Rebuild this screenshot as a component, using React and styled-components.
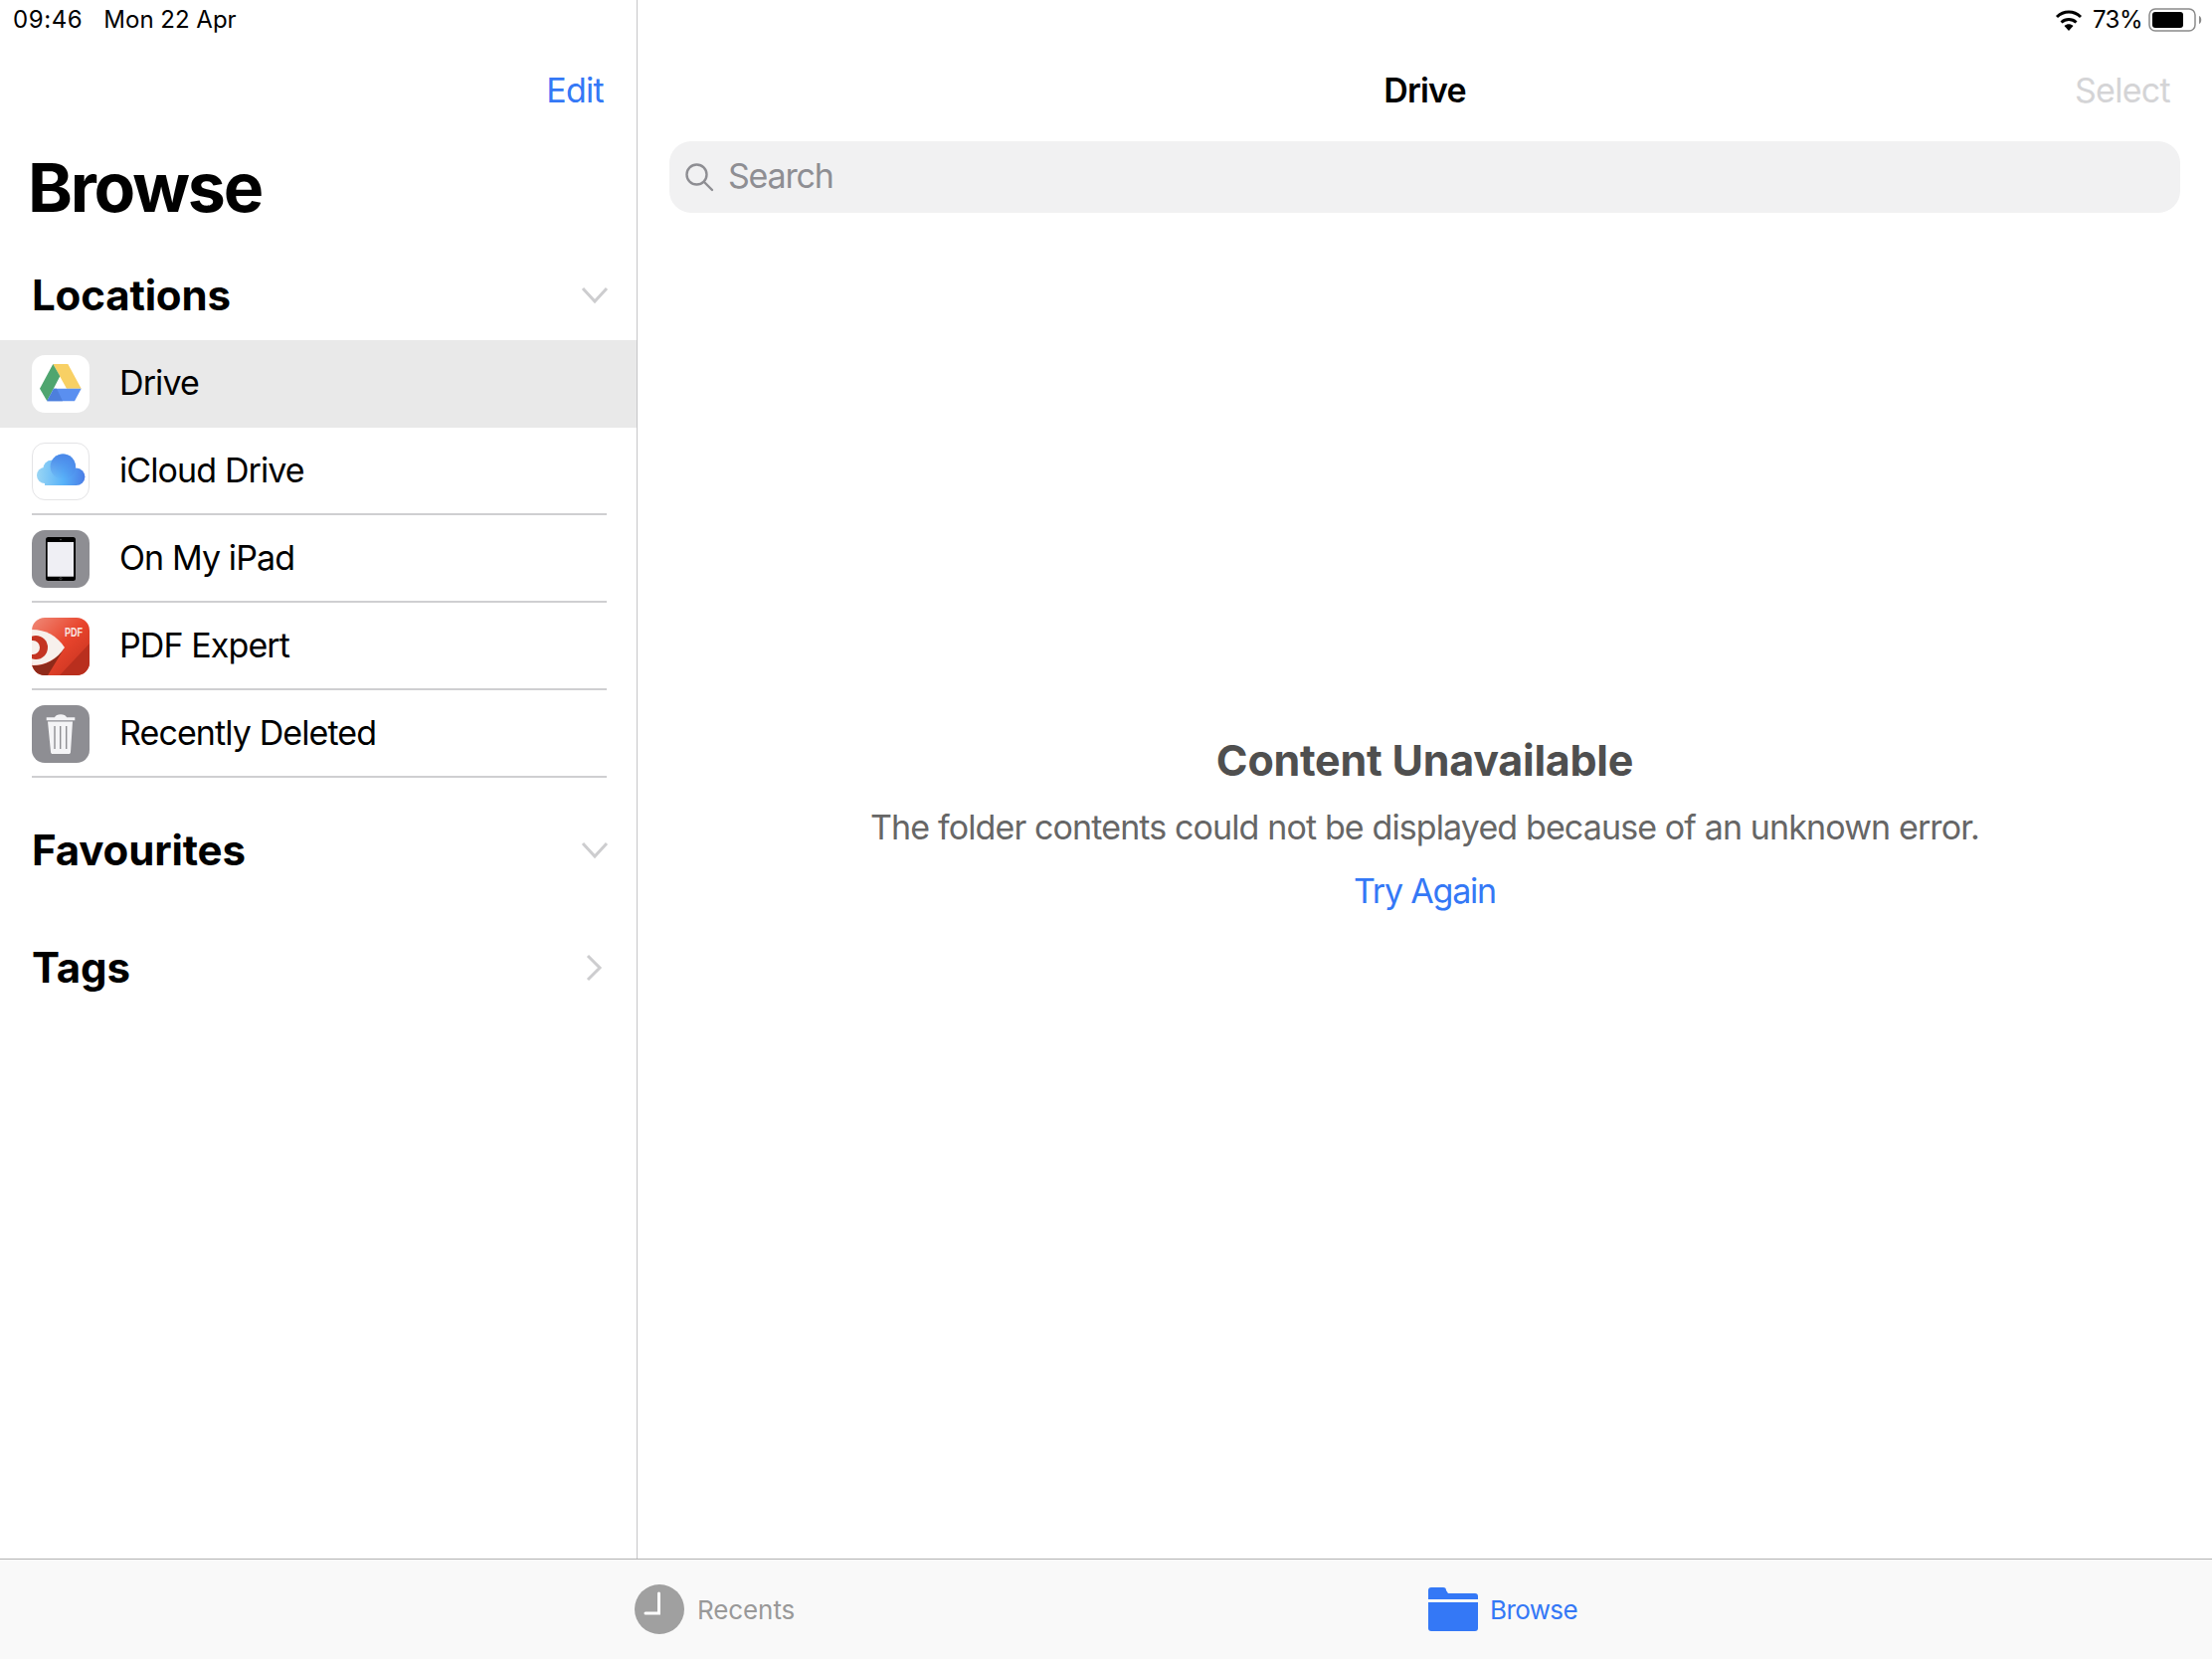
import React from "react";
import styled, { createGlobalStyle } from "styled-components";

const GlobalStyle = createGlobalStyle`
  html, body { margin: 0; padding: 0; background: #fff; }
  body { font-family: Inter, "Liberation Sans", sans-serif; color: #000; }
`;

const BLUE = "#3478f6";

const Page = styled.div`
  width: 2224px;
  height: 1668px;
  display: flex;
  flex-direction: column;
  overflow: hidden;
`;
const Main = styled.div`
  flex: 1;
  min-height: 0;
  display: flex;
`;
const Sidebar = styled.aside`
  width: 640px;
  flex: none;
  border-right: 1px solid #c6c6c8;
  display: flex;
  flex-direction: column;
`;
const Detail = styled.main`
  flex: 1;
  min-width: 0;
  display: flex;
  flex-direction: column;
`;
const StatusBar = styled.div`
  height: 40px;
  display: flex;
  align-items: center;
  justify-content: ${(p) => (p.$right ? "flex-end" : "flex-start")};
  padding: 0 9px 0 13px;
  font-size: 24px;
  line-height: 40px;
  color: #000;
`;
const StatusTime = styled.span`
  letter-spacing: 0.6px;
`;
const StatusDate = styled.span`
  margin-left: 21px;
`;
const Percent = styled.span`
  margin: 0 6px 0 10px;
  letter-spacing: -0.5px;
`;
const NavBar = styled.div`
  height: 100px;
  flex: none;
  display: flex;
  align-items: center;
  justify-content: flex-end;
  padding: 0 33px 0 32px;
`;
const NavButton = styled.span`
  font-size: 34px;
  letter-spacing: -0.7px;
  color: ${(p) => (p.$disabled ? "#d4d4d6" : BLUE)};
`;
const BigTitle = styled.h1`
  margin: 0;
  height: 96px;
  padding-left: 28px;
  font-size: 68px;
  font-weight: 700;
  line-height: 96px;
  letter-spacing: -2.2px;
`;
const SectionHead = styled.div`
  height: ${(p) => p.$height}px;
  box-sizing: border-box;
  padding: ${(p) => p.$top || 0}px 28px 0 32px;
  display: flex;
  align-items: center;
  justify-content: space-between;
`;
const SectionLabel = styled.span`
  padding-bottom: 2px;
  font-size: 42px;
  font-weight: 700;
  letter-spacing: -0.15px;
`;
const Rows = styled.div`
  display: flex;
  flex-direction: column;
`;
const Row = styled.div`
  height: 88px;
  box-sizing: border-box;
  padding-left: 32px;
  display: flex;
  align-items: center;
  background: ${(p) => (p.$active ? "#e9e9e9" : "transparent")};
`;
const RowBody = styled.div`
  flex: 1;
  height: 100%;
  box-sizing: border-box;
  margin-left: 30px;
  margin-right: 30px;
  padding-bottom: 3px;
  display: flex;
  align-items: center;
  font-size: 34px;
  letter-spacing: -0.9px;
  position: relative;
  &::after {
    content: "";
    display: ${(p) => (p.$plain ? "none" : "block")};
    position: absolute;
    left: -88px;
    right: 0;
    bottom: 0;
    height: 2px;
    background: #cfcfd1;
  }
`;
const IconFrame = styled.div`
  width: 58px;
  height: 58px;
  flex: none;
  border-radius: 13px;
  overflow: hidden;
  box-sizing: border-box;
  background: #fff;
  ${(p) => (p.$outlined ? "border: 1px solid #e4e4e6;" : "")}
  svg { display: block; width: 100%; height: 100%; }
`;
const DetailNav = styled.div`
  height: 100px;
  flex: none;
  display: flex;
  align-items: center;
  justify-content: center;
  position: relative;
  font-size: 34px;
  font-weight: 600;
  letter-spacing: -0.8px;
`;
const SelectSlot = styled.div`
  position: absolute;
  right: 42px;
  top: 50%;
  transform: translateY(-50%);
  font-weight: 400;
`;
const SearchBox = styled.div`
  height: 72px;
  box-sizing: border-box;
  margin: 2px 32px 0;
  border-radius: 22px;
  background: #f1f1f2;
  display: flex;
  align-items: center;
  padding: 0 0 0 15px;
  font-size: 34px;
  letter-spacing: -1.2px;
  color: #8e8e93;
  gap: 14px;
`;
const SearchLabel = styled.span`
  padding-bottom: 3px;
`;
const Empty = styled.div`
  flex: 1;
  display: flex;
  flex-direction: column;
  align-items: center;
  padding-top: 520px;
`;
const EmptyTitle = styled.div`
  font-size: 43px;
  font-weight: 700;
  line-height: 60px;
  letter-spacing: -0.25px;
  color: #4f4f4f;
`;
const EmptyText = styled.div`
  margin-top: 17px;
  font-size: 34px;
  line-height: 42px;
  letter-spacing: -0.88px;
  color: #666;
`;
const Retry = styled.div`
  margin-top: 22px;
  font-size: 34px;
  line-height: 42px;
  letter-spacing: -1.2px;
  color: ${BLUE};
`;
const TabBar = styled.nav`
  height: 100px;
  flex: none;
  border-top: 1px solid #b2b2b2;
  background: #f9f9f9;
  display: flex;
`;
const TabSlot = styled.div`
  width: ${(p) => p.$width}px;
  flex: none;
  display: flex;
  align-items: center;
  padding-left: ${(p) => p.$left}px;
  box-sizing: border-box;
`;
const TabLabel = styled.span`
  margin-left: ${(p) => (p.$active ? 12 : 13)}px;
  font-size: 26px;
  letter-spacing: ${(p) => (p.$active ? "-0.6px" : "-0.1px")};
  color: ${(p) => (p.$active ? BLUE : "#999")};
`;

const DriveIcon = () => (
  <svg viewBox="0 0 58 58">
    <path d="M21.3 9 H36.3 L49.7 33.7 H35 Z" fill="#f8d064" />
    <path d="M21.3 9 L28.3 21.3 L15.3 46.3 L8 33.7 Z" fill="#4fa56f" />
    <path d="M22 33.7 H49.7 L43 46.3 H15.3 Z" fill="#5a8ff0" />
    <path d="M22 33.7 H25 L31 46.3 H15.3 Z" fill="#4d7fdc" />
  </svg>
);

const CloudIcon = () => (
  <svg viewBox="0 0 56 56">
    <defs>
      <linearGradient id="cloudFill" gradientUnits="userSpaceOnUse" x1="5" y1="0" x2="52" y2="0">
        <stop offset="0" stopColor="#97d4f4" />
        <stop offset="0.55" stopColor="#58b2f9" />
        <stop offset="1" stopColor="#4a7de6" />
      </linearGradient>
      <linearGradient id="cloudTop" x1="0" y1="0" x2="0" y2="1">
        <stop offset="0" stopColor="#4a86e8" />
        <stop offset="1" stopColor="#4a86e8" stopOpacity="0" />
      </linearGradient>
    </defs>
    <g fill="url(#cloudFill)">
      <circle cx="12" cy="32" r="8" />
      <circle cx="18.7" cy="25" r="8.3" />
      <circle cx="30.3" cy="23.3" r="12.7" />
      <circle cx="43.7" cy="33.3" r="8.7" />
      <rect x="12" y="30" width="32" height="12" />
    </g>
    <circle cx="30.3" cy="23.3" r="12.7" fill="url(#cloudTop)" />
  </svg>
);

const IpadIcon = () => (
  <svg viewBox="0 0 58 58">
    <rect width="58" height="58" fill="#8e8e93" />
    <rect x="14" y="7" width="30" height="44" rx="2.5" fill="#000" />
    <rect x="15.7" y="12" width="26.3" height="34.7" fill="#efeff4" />
    <circle cx="29" cy="9.5" r="0.7" fill="#777" />
    <circle cx="29" cy="48.7" r="1.2" fill="none" stroke="#777" strokeWidth="0.5" />
  </svg>
);

const PdfIcon = () => (
  <svg viewBox="0 0 58 58">
    <defs>
      <linearGradient id="pdfFill" x1="0" y1="0" x2="1" y2="1">
        <stop offset="0" stopColor="#f08a78" />
        <stop offset="0.5" stopColor="#e8442c" />
        <stop offset="1" stopColor="#c0301e" />
      </linearGradient>
    </defs>
    <rect width="58" height="58" fill="url(#pdfFill)" />
    <path d="M58 26 L28 58 H58 Z" fill="#b92f1e" />
    <path d="M0 48 C12 49 22 44 33 30 L16 58 H0 Z" fill="#8f2a1a" />
    <path d="M0 12 C14 12 25 18 33 30 C25 42 14 48 0 48 Z" fill="#f7f0ec" />
    <circle cx="4" cy="30" r="12" fill="#c43422" />
    <circle cx="1" cy="30" r="7" fill="#f7f0ec" />
    <text x="33" y="19" fontFamily="Liberation Sans, sans-serif" fontWeight="700" fontSize="13" textLength="18" lengthAdjust="spacingAndGlyphs" fill="#f8e6e1">PDF</text>
  </svg>
);

const TrashIcon = () => (
  <svg viewBox="0 0 58 58">
    <rect width="58" height="58" fill="#8e8e93" />
    <path d="M14.7 12.2 H23 C24 8.2 34 8.2 35 12.2 H43.3 V15.2 H14.7 Z" fill="#f4f4f6" />
    <path d="M16 16.5 H41 L39 47 C39 48.4 38 49 37 49 H21 C20 49 19 48.4 19 47 Z" fill="#f4f4f6" />
    <path d="M23 21 V44 M28.7 21 V44 M34.7 21 V44" stroke="#8e8e93" strokeWidth="1.4" />
  </svg>
);

const Chevron = ({ right }) => (
  <svg width="28" height="28" viewBox="0 0 28 28" fill="none" stroke="#cdcdcf" strokeWidth="3">
    <path d={right ? "M7 2 L19 14 L7 26" : "M2 7 L14 20 L26 7"} />
  </svg>
);

const SearchIcon = () => (
  <svg width="30" height="30" viewBox="0 0 30 30" fill="none" stroke="#8e8e93" strokeWidth="2.4">
    <circle cx="12.5" cy="12.5" r="10" />
    <path d="M20 20 L28 28" strokeLinecap="round" />
  </svg>
);

const WifiIcon = () => (
  <svg width="28" height="22" viewBox="0 0 28 22">
    <path d="M14 22 L9.5 17 C12 14.6 16 14.6 18.5 17 Z" fill="#000" />
    <path d="M6.5 13.5 C10.8 9.6 17.2 9.6 21.5 13.5" fill="none" stroke="#000" strokeWidth="3" />
    <path d="M2 8 C9 1.4 19 1.4 26 8" fill="none" stroke="#000" strokeWidth="3" />
  </svg>
);

const BatteryIcon = () => (
  <svg width="55" height="24" viewBox="0 0 55 24">
    <rect x="1" y="1" width="46" height="22" rx="6" fill="none" stroke="#8a8a8a" strokeWidth="1.5" />
    <rect x="4" y="4" width="31" height="16" rx="3" fill="#000" />
    <path d="M51 8 C54 9 54 15 51 16 Z" fill="#8a8a8a" />
  </svg>
);

const ClockIcon = () => (
  <svg width="50" height="50" viewBox="0 0 50 50">
    <circle cx="25" cy="25" r="25" fill="#a0a0a0" />
    <path d="M24.5 9 V29 H11" fill="none" stroke="#fff" strokeWidth="3" strokeLinecap="round" />
  </svg>
);

const FolderIcon = () => (
  <svg width="50" height="44" viewBox="0 0 50 44">
    <path d="M0 3 C0 1 1 0 3 0 H15 C17 0 18 1 18 3 L20 6 H47 C49 6 50 7 50 9 V12 H0 Z" fill={BLUE} />
    <path d="M0 15 H50 V41 C50 43 49 44 47 44 H3 C1 44 0 43 0 41 Z" fill={BLUE} />
  </svg>
);

const locations = [
  { name: "Drive", icon: <DriveIcon />, active: true, plain: true },
  { name: "iCloud Drive", icon: <CloudIcon />, outlined: true },
  { name: "On My iPad", icon: <IpadIcon /> },
  { name: "PDF Expert", icon: <PdfIcon /> },
  { name: "Recently Deleted", icon: <TrashIcon /> },
];

export default function App() {
  return (
    <>
      <GlobalStyle />
      <Page>
        <Main>
          <Sidebar>
            <StatusBar>
              <StatusTime>09:46</StatusTime>
              <StatusDate>Mon 22 Apr</StatusDate>
            </StatusBar>
            <NavBar>
              <NavButton>Edit</NavButton>
            </NavBar>
            <BigTitle>Browse</BigTitle>
            <SectionHead $height={106} $top={16}>
              <SectionLabel>Locations</SectionLabel>
              <Chevron />
            </SectionHead>
            <Rows>
              {locations.map((l) => (
                <Row key={l.name} $active={l.active}>
                  <IconFrame $outlined={l.outlined}>{l.icon}</IconFrame>
                  <RowBody $plain={l.plain}>{l.name}</RowBody>
                </Row>
              ))}
            </Rows>
            <SectionHead $height={146}>
              <SectionLabel>Favourites</SectionLabel>
              <Chevron />
            </SectionHead>
            <SectionHead $height={90}>
              <SectionLabel>Tags</SectionLabel>
              <Chevron right />
            </SectionHead>
          </Sidebar>
          <Detail>
            <StatusBar $right>
              <WifiIcon />
              <Percent>73%</Percent>
              <BatteryIcon />
            </StatusBar>
            <DetailNav>
              Drive
              <SelectSlot>
                <NavButton $disabled>Select</NavButton>
              </SelectSlot>
            </DetailNav>
            <SearchBox>
              <SearchIcon />
              <SearchLabel>Search</SearchLabel>
            </SearchBox>
            <Empty>
              <EmptyTitle>Content Unavailable</EmptyTitle>
              <EmptyText>The folder contents could not be displayed because of an unknown error.</EmptyText>
              <Retry>Try Again</Retry>
            </Empty>
          </Detail>
        </Main>
        <TabBar>
          <TabSlot $width={1436} $left={638}>
            <ClockIcon />
            <TabLabel>Recents</TabLabel>
          </TabSlot>
          <TabSlot $width={788} $left={0}>
            <FolderIcon />
            <TabLabel $active>Browse</TabLabel>
          </TabSlot>
        </TabBar>
      </Page>
    </>
  );
}
